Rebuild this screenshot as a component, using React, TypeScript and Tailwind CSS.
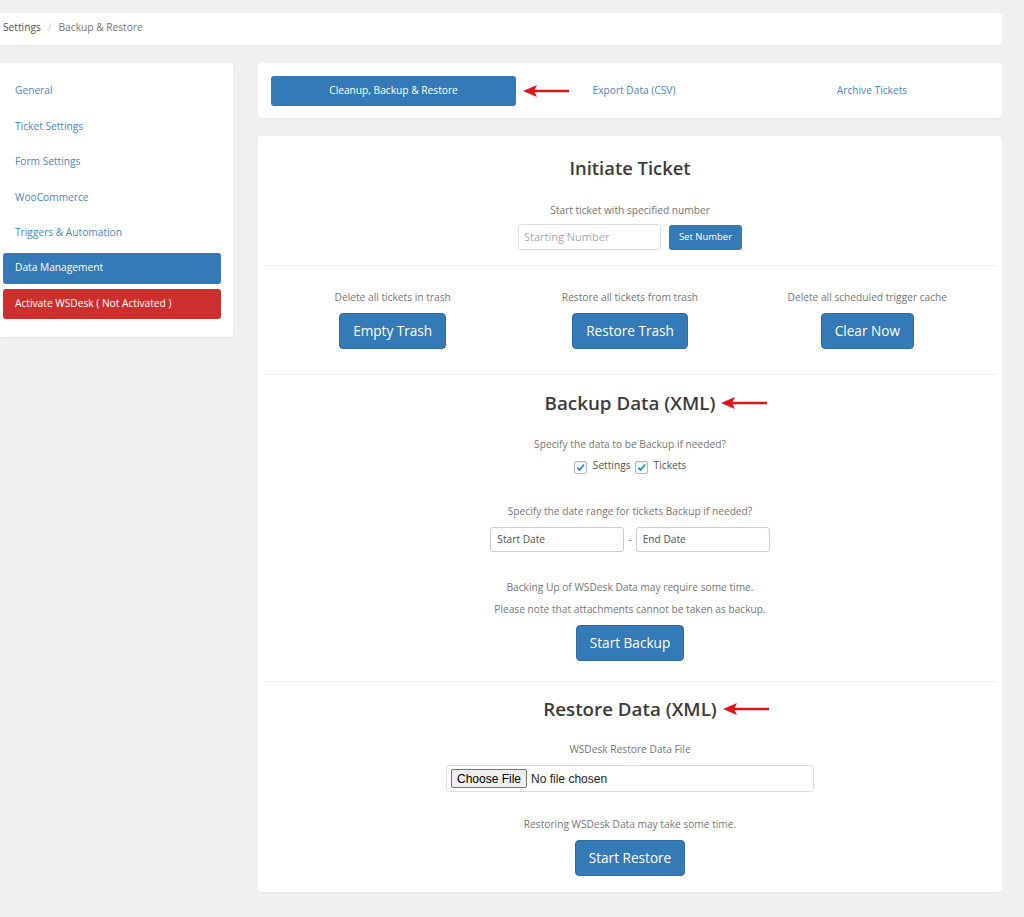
import React from "react";

const font = { fontFamily: '"Open Sans", "Noto Sans", sans-serif' };

function Arrow() {
  return (
    <svg width="46" height="12" viewBox="0 0 46 12" className="block">
      <line x1="10" y1="6" x2="46" y2="6" stroke="#e0161b" strokeWidth="2.5" />
      <polygon points="0,6 14,0 11,6 14,12" fill="#e0161b" />
    </svg>
  );
}

function Check() {
  return (
    <span className="inline-flex items-center justify-center w-[13px] h-[13px] border border-[#b4b9be] rounded-[2px] bg-white shadow-[inset_0_1px_2px_rgba(0,0,0,0.1)]">
      <svg width="11" height="11" viewBox="0 0 12 12">
        <path d="M2.5 6.2 L5 8.7 L9.8 2.8" fill="none" stroke="#1e8cbe" strokeWidth="1.8" />
      </svg>
    </span>
  );
}

function BigBtn({ children }: { children: React.ReactNode }) {
  return (
    <button className="bg-[#337ab7] text-white text-[13.6px] leading-[20px] h-[36px] px-[13px] rounded-[4px] border border-[#2e6da4]">
      {children}
    </button>
  );
}

function Heading({ children }: { children: React.ReactNode }) {
  return (
    <div className="flex justify-center">
      <span className="relative text-[18.8px] leading-[28px] font-semibold text-[#3c3c3c]">
        {children}
        <span className="absolute left-full top-[8px] ml-[6px]">
          <Arrow />
        </span>
      </span>
    </div>
  );
}

export default function App() {
  const links = ["General", "Ticket Settings", "Form Settings", "WooCommerce", "Triggers & Automation"];
  return (
    <div style={font} className="min-h-[917px] bg-[#f0f0f0] pt-[13px] pr-[22px] text-[10.2px] text-[#777]">
      <div className="h-[32px] bg-white rounded-r-[4px] flex items-center pl-[3px] pb-[3px] shadow-[0_1px_1px_rgba(0,0,0,0.04)]">
        <span className="text-[#555]">Settings</span>
        <span className="mx-[7px] text-[#ccc]">/</span>
        <span className="text-[#777]">Backup &amp; Restore</span>
      </div>

      <div className="flex gap-[25px] mt-[18px] items-start">
        <div className="w-[233px] shrink-0 bg-white rounded-r-[4px] pt-[10px] pb-[18px] shadow-[0_1px_1px_rgba(0,0,0,0.04)]">
          {links.map((l) => (
            <div key={l} className="h-[35.5px] flex items-center pl-[15px] text-[#4a86c4]">
              {l}
            </div>
          ))}
          <div className="ml-[3px] mt-[2px] w-[218px] h-[31px] bg-[#337ab7] rounded-[3px] flex items-center pl-[12px] text-white">
            Data Management
          </div>
          <div className="ml-[3px] mt-[5px] w-[218px] h-[30px] bg-[#cc2f2c] rounded-[3px] flex items-center pl-[12px] text-white">
            Activate WSDesk ( Not Activated )
          </div>
        </div>

        <div className="flex-1 flex flex-col gap-[18px]">
          <div className="bg-white rounded-[4px] h-[55px] pl-[13px] pr-[14px] flex items-center shadow-[0_1px_1px_rgba(0,0,0,0.04)]">
            <div className="grid grid-cols-[245px_1fr_1fr] w-full items-center">
              <div className="relative">
                <div className="h-[30px] bg-[#337ab7] rounded-[3px] flex items-center justify-center text-white pt-[1px]">
                  Cleanup, Backup &amp; Restore
                </div>
                <span className="absolute left-full top-[9px] ml-[7px]">
                  <Arrow />
                </span>
              </div>
              <div className="text-center text-[#4a86c4] pt-[1px]">Export Data (CSV)</div>
              <div className="text-center text-[#4a86c4] pt-[1px] pl-[4px]">Archive Tickets</div>
            </div>
          </div>

          <div className="bg-white rounded-[4px] shadow-[0_1px_1px_rgba(0,0,0,0.04)] px-[5px] pb-[16px]">
            {/* Initiate Ticket */}
            <div className="pt-[18px] pb-[15px] flex flex-col items-center">
              <div className="text-[18.4px] leading-[28px] font-semibold text-[#3c3c3c]">Initiate Ticket</div>
              <div className="mt-[20px] leading-[16px]">Start ticket with specified number</div>
              <div className="mt-[6px] flex gap-[8px] items-center">
                <div className="w-[143px] h-[26px] border border-[#ddd] rounded-[3px] flex items-center pl-[5px] text-[11px] text-[#aaa]">
                  Starting Number
                </div>
                <div className="w-[73px] h-[25px] bg-[#337ab7] rounded-[3px] flex items-center justify-center text-white text-[9.5px]">
                  Set Number
                </div>
              </div>
            </div>
            <div className="h-px bg-[#eee]" />

            {/* three actions */}
            <div className="px-[11px] pt-[23px] pb-[25px] grid grid-cols-3">
              {[
                ["Delete all tickets in trash", "Empty Trash"],
                ["Restore all tickets from trash", "Restore Trash"],
                ["Delete all scheduled trigger cache", "Clear Now"],
              ].map(([t, b]) => (
                <div key={b} className="flex flex-col items-center">
                  <div className="leading-[16px]">{t}</div>
                  <div className="mt-[8px]">
                    <BigBtn>{b}</BigBtn>
                  </div>
                </div>
              ))}
            </div>
            <div className="h-px bg-[#eee]" />

            {/* Backup */}
            <div className="pt-[14px] pb-[20px] flex flex-col items-center">
              <Heading>Backup Data (XML)</Heading>
              <div className="mt-[19px] leading-[16px]">Specify the data to be Backup if needed?</div>
              <div className="mt-[7px] h-[16px] flex items-center text-[#555]">
                <span className="mt-[5px]"><Check /></span>
                <span className="ml-[6px] mr-[4px] -mt-[2px]">Settings</span>
                <span className="mt-[5px]"><Check /></span>
                <span className="ml-[6px] -mt-[2px]">Tickets</span>
              </div>
              <div className="mt-[28px] leading-[16px]">Specify the date range for tickets Backup if needed?</div>
              <div className="mt-[8px] flex items-center gap-[4px]">
                <div className="w-[134px] h-[25px] border border-[#ccc] rounded-[3px] flex items-center pl-[6px] text-[#555]">
                  Start Date
                </div>
                <span className="text-[#777]">-</span>
                <div className="w-[134px] h-[25px] border border-[#ccc] rounded-[3px] flex items-center pl-[6px] text-[#555]">
                  End Date
                </div>
              </div>
              <div className="mt-[27px] leading-[16px]">Backing Up of WSDesk Data may require some time.</div>
              <div className="mt-[6px] leading-[16px]">Please note that attachments cannot be taken as backup.</div>
              <div className="mt-[8px]">
                <BigBtn>Start Backup</BigBtn>
              </div>
            </div>
            <div className="h-px bg-[#eee]" />

            {/* Restore */}
            <div className="pt-[13px] flex flex-col items-center">
              <Heading>Restore Data (XML)</Heading>
              <div className="mt-[18px] leading-[16px]">WSDesk Restore Data File</div>
              <div className="mt-[8px] w-[368px] h-[27px] border border-[#ddd] rounded-[3px] flex items-center pl-[4px] gap-[4px]" style={{ fontFamily: '"Liberation Sans", Arial, sans-serif' }}>
                <span className="h-[19px] px-[5px] border border-[#767676] rounded-[2px] bg-[#efefef] text-[12px] text-black flex items-center">
                  Choose File
                </span>
                <span className="text-[12px] text-[#222]">No file chosen</span>
              </div>
              <div className="mt-[24px] leading-[16px]">Restoring WSDesk Data may take some time.</div>
              <div className="mt-[8px]">
                <BigBtn>Start Restore</BigBtn>
              </div>
            </div>
          </div>
        </div>
      </div>
    </div>
  );
}
